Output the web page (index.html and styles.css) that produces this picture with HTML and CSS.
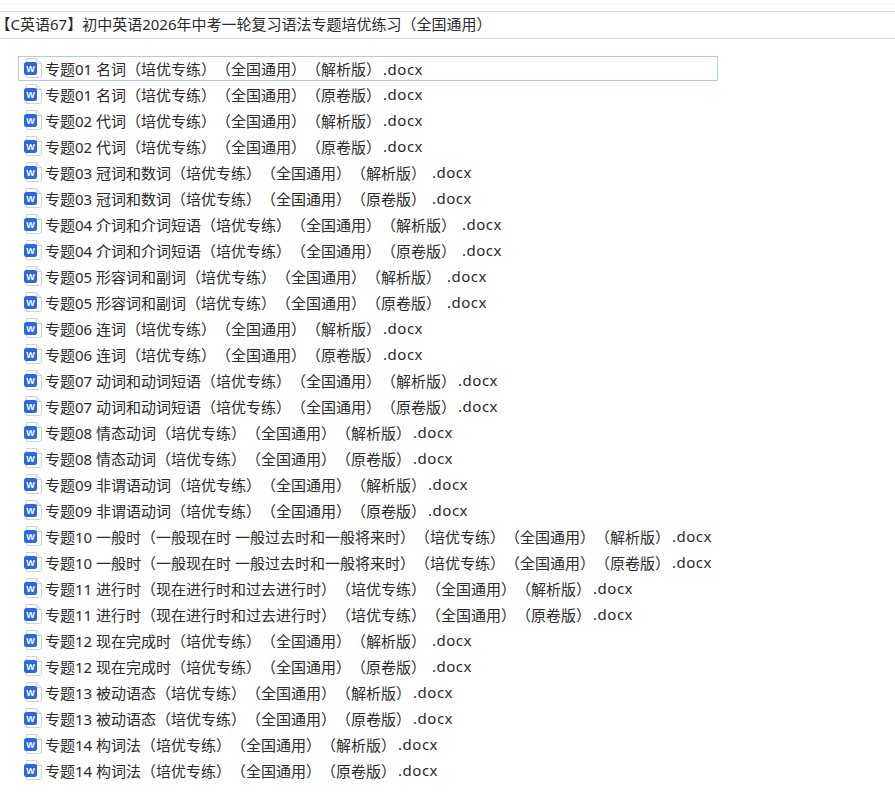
FILE: index.html
```html
<!DOCTYPE html>
<html lang="zh-CN">
<head>
    <meta charset="UTF-8">
    <title>文件列表</title>
    <link rel="stylesheet" href="styles.css">
</head>
<body>
    <svg class="sprite" width="0" height="0">
        <symbol id="word" viewBox="0 0 18 20">
            <path d="M2.5 .5h10l5 5v12a2 2 0 0 1-2 2h-13z" fill="#fff" stroke="#cfd2d6"/>
            <path d="M12.5 .5v5h5" fill="#eef0f2" stroke="#cfd2d6"/>
            <rect x="0" y="4" width="13" height="13" rx="2.5" fill="#2a68de"/>
            <text x="6.5" y="13.5" text-anchor="middle" class="word-letter">W</text>
        </symbol>
    </svg>
    <div class="topbar"></div>
    <div class="title">【C英语67】初中英语2026年中考一轮复习语法专题培优练习（全国通用）</div>
    <ul class="files">
        <li class="selected"><svg class="icon"><use href="#word"/></svg>专题01 名词（培优专练）（全国通用）（解析版）<span class="ext">.docx</span></li>
        <li><svg class="icon"><use href="#word"/></svg>专题01 名词（培优专练）（全国通用）（原卷版）<span class="ext">.docx</span></li>
        <li><svg class="icon"><use href="#word"/></svg>专题02 代词（培优专练）（全国通用）（解析版）<span class="ext">.docx</span></li>
        <li><svg class="icon"><use href="#word"/></svg>专题02 代词（培优专练）（全国通用）（原卷版）<span class="ext">.docx</span></li>
        <li><svg class="icon"><use href="#word"/></svg>专题03 冠词和数词（培优专练）（全国通用）（解析版） <span class="ext">.docx</span></li>
        <li><svg class="icon"><use href="#word"/></svg>专题03 冠词和数词（培优专练）（全国通用）（原卷版） <span class="ext">.docx</span></li>
        <li><svg class="icon"><use href="#word"/></svg>专题04 介词和介词短语（培优专练）（全国通用）（解析版） <span class="ext">.docx</span></li>
        <li><svg class="icon"><use href="#word"/></svg>专题04 介词和介词短语（培优专练）（全国通用）（原卷版） <span class="ext">.docx</span></li>
        <li><svg class="icon"><use href="#word"/></svg>专题05 形容词和副词（培优专练）（全国通用）（解析版） <span class="ext">.docx</span></li>
        <li><svg class="icon"><use href="#word"/></svg>专题05 形容词和副词（培优专练）（全国通用）（原卷版） <span class="ext">.docx</span></li>
        <li><svg class="icon"><use href="#word"/></svg>专题06 连词（培优专练）（全国通用）（解析版）<span class="ext">.docx</span></li>
        <li><svg class="icon"><use href="#word"/></svg>专题06 连词（培优专练）（全国通用）（原卷版）<span class="ext">.docx</span></li>
        <li><svg class="icon"><use href="#word"/></svg>专题07 动词和动词短语（培优专练）（全国通用）（解析版）<span class="ext">.docx</span></li>
        <li><svg class="icon"><use href="#word"/></svg>专题07 动词和动词短语（培优专练）（全国通用）（原卷版）<span class="ext">.docx</span></li>
        <li><svg class="icon"><use href="#word"/></svg>专题08 情态动词（培优专练）（全国通用）（解析版）<span class="ext">.docx</span></li>
        <li><svg class="icon"><use href="#word"/></svg>专题08 情态动词（培优专练）（全国通用）（原卷版）<span class="ext">.docx</span></li>
        <li><svg class="icon"><use href="#word"/></svg>专题09 非谓语动词（培优专练）（全国通用）（解析版）<span class="ext">.docx</span></li>
        <li><svg class="icon"><use href="#word"/></svg>专题09 非谓语动词（培优专练）（全国通用）（原卷版）<span class="ext">.docx</span></li>
        <li><svg class="icon"><use href="#word"/></svg>专题10 一般时（一般现在时 一般过去时和一般将来时）（培优专练）（全国通用）（解析版）<span class="ext">.docx</span></li>
        <li><svg class="icon"><use href="#word"/></svg>专题10 一般时（一般现在时 一般过去时和一般将来时）（培优专练）（全国通用）（原卷版）<span class="ext">.docx</span></li>
        <li><svg class="icon"><use href="#word"/></svg>专题11 进行时（现在进行时和过去进行时）（培优专练）（全国通用）（解析版）<span class="ext">.docx</span></li>
        <li><svg class="icon"><use href="#word"/></svg>专题11 进行时（现在进行时和过去进行时）（培优专练）（全国通用）（原卷版）<span class="ext">.docx</span></li>
        <li><svg class="icon"><use href="#word"/></svg>专题12 现在完成时（培优专练）（全国通用）（解析版） <span class="ext">.docx</span></li>
        <li><svg class="icon"><use href="#word"/></svg>专题12 现在完成时（培优专练）（全国通用）（原卷版） <span class="ext">.docx</span></li>
        <li><svg class="icon"><use href="#word"/></svg>专题13 被动语态（培优专练）（全国通用）（解析版）<span class="ext">.docx</span></li>
        <li><svg class="icon"><use href="#word"/></svg>专题13 被动语态（培优专练）（全国通用）（原卷版）<span class="ext">.docx</span></li>
        <li><svg class="icon"><use href="#word"/></svg>专题14 构词法（培优专练）（全国通用）（解析版）<span class="ext">.docx</span></li>
        <li><svg class="icon"><use href="#word"/></svg>专题14 构词法（培优专练）（全国通用）（原卷版）<span class="ext">.docx</span></li>
    </ul>
</body>
</html>
```

FILE: styles.css
```css
body {
    margin: 0;
    background-color: #fff;
    color: #2b2b2b;
    font-family: "Noto Sans", "Noto Sans CJK SC", sans-serif;
    font-size: 15px;
    text-spacing-trim: space-all;
    overflow: hidden;
}
.sprite {
    display: block;
    height: 0;
}
.topbar {
    height: 7px;
    margin-top: 3px;
    border-top: 1px solid #f3f3f3;
    border-bottom: 1px solid #dfdfdf;
}
.title {
    height: 26px;
    line-height: 24px;
    padding-left: 3px;
    text-spacing-trim: trim-start;
    border-bottom: 1px solid #dcdcdc;
}
.files {
    list-style: none;
    margin: 17px 0 0 18px;
    padding: 0;
    width: 700px;
}
.files li {
    display: flex;
    align-items: center;
    gap: 3px;
    height: 26px;
    padding-left: 6px;
    box-sizing: border-box;
    white-space: pre;
}
.files li.selected {
    height: 25px;
    border: 1px solid #a9cde6;
    padding-left: 5px;
}
.ext {
    margin-left: -1px;
    letter-spacing: .5px;
}
.icon {
    width: 18px;
    height: 20px;
    flex: none;
    margin-top: -1px;
}
.word-letter {
    font-family: "Liberation Sans", sans-serif;
    font-size: 9px;
    font-weight: bold;
    fill: #fff;
}
```
